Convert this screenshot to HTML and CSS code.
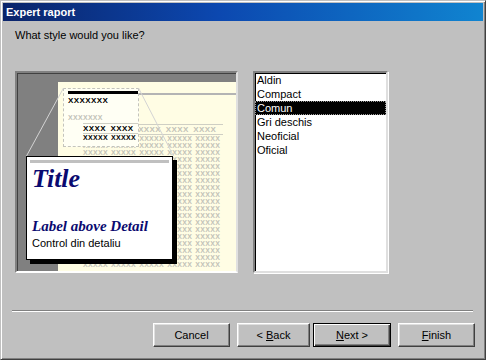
FILE: index.html
```html
<!DOCTYPE html>
<html>
<head>
<meta charset="utf-8">
<title>Expert raport</title>
<link rel="stylesheet" href="styles.css">
</head>
<body>
<div class="window">
  <div class="titlebar">Expert raport</div>
  <p class="prompt">What style would you like?</p>
  <div class="main">
    <div class="preview">
      <div class="paper">
        <div class="paper-rule"></div>
        <div class="grid">
          <div class="grid-head">XXXX XXXX XXXX XXXX XXXX</div>
          <div class="grid-row">XXXXX XXXXX XXXXX XXXXX XXXXX</div>
          <div class="grid-row">XXXXX XXXXX XXXXX XXXXX XXXXX</div>
          <div class="grid-row">XXXXX XXXXX XXXXX XXXXX XXXXX</div>
          <div class="grid-row">XXXXX XXXXX XXXXX XXXXX XXXXX</div>
          <div class="grid-row">XXXXX XXXXX XXXXX XXXXX XXXXX</div>
          <div class="grid-row">XXXXX XXXXX XXXXX XXXXX XXXXX</div>
          <div class="grid-row">XXXXX XXXXX XXXXX XXXXX XXXXX</div>
          <div class="grid-row">XXXXX XXXXX XXXXX XXXXX XXXXX</div>
          <div class="grid-row">XXXXX XXXXX XXXXX XXXXX XXXXX</div>
          <div class="grid-row">XXXXX XXXXX XXXXX XXXXX XXXXX</div>
          <div class="grid-row">XXXXX XXXXX XXXXX XXXXX XXXXX</div>
          <div class="grid-row">XXXXX XXXXX XXXXX XXXXX XXXXX</div>
          <div class="grid-row">XXXXX XXXXX XXXXX XXXXX XXXXX</div>
          <div class="grid-row">XXXXX XXXXX XXXXX XXXXX XXXXX</div>
          <div class="grid-row">XXXXX XXXXX XXXXX XXXXX XXXXX</div>
          <div class="grid-row">XXXXX XXXXX XXXXX XXXXX XXXXX</div>
          <div class="grid-row">XXXXX XXXXX XXXXX XXXXX XXXXX</div>
          <div class="grid-row">XXXXX XXXXX XXXXX XXXXX XXXXX</div>
          <div class="grid-row">XXXXX XXXXX XXXXX XXXXX XXXXX</div>
        </div>
        <div class="callout">
          <div class="callout-rule"></div>
          <div class="c-title">XXXXXXX</div>
          <div class="c-label">XXXXXXX</div>
          <div class="c-grid">
            <div class="c-head">XXXX XXXX</div>
            <div class="c-row">XXXXX XXXXX</div>
          </div>
        </div>
      </div>
      <svg class="leaders" width="219" height="198" viewBox="0 0 219 198">
        <line x1="46.5" y1="15" x2="9.5" y2="83" stroke="#d4d4d4" stroke-width="1"/>
        <line x1="121.5" y1="15" x2="156.5" y2="83" stroke="#d4d4d4" stroke-width="1"/>
      </svg>
      <div class="popup">
        <div class="popup-bar"></div>
        <div class="popup-title">Title</div>
        <div class="popup-label">Label above Detail</div>
        <div class="popup-control">Control din detaliu</div>
      </div>
    </div>
    <ul class="listbox">
      <li class="item">Aldin</li>
      <li class="item">Compact</li>
      <li class="item selected">Comun</li>
      <li class="item">Gri deschis</li>
      <li class="item">Neoficial</li>
      <li class="item">Oficial</li>
    </ul>
  </div>
  <div class="separator"></div>
  <div class="buttons">
    <button class="btn btn-cancel">Cancel</button>
    <button class="btn btn-back">&lt; <u>B</u>ack</button>
    <button class="btn btn-next btn-default"><u>N</u>ext &gt;</button>
    <button class="btn btn-finish"><u>F</u>inish</button>
  </div>
</div>
</body>
</html>
```
FILE: styles.css
```css
* { box-sizing: border-box; }

html, body {
  margin: 0;
  padding: 0;
  background: #c0c0c0;
}

body {
  font-family: "Liberation Sans", Arial, sans-serif;
  font-size: 11px;
  color: #000;
}

.window {
  width: 486px;
  height: 360px;
  background: #c0c0c0;
  border: 1px solid;
  border-color: #c0c0c0 #404040 #404040 #c0c0c0;
  box-shadow: inset 1px 1px 0 #ffffff, inset -1px -1px 0 #808080;
  padding: 2px;
  display: flex;
  flex-direction: column;
}

.titlebar {
  height: 18px;
  line-height: 18px;
  padding-left: 3px;
  color: #fff;
  font-weight: bold;
  font-size: 11px;
  background: linear-gradient(to right, #0a246a 0%, #0c48b0 45%, #1084d0 100%);
  flex: none;
}

.prompt {
  margin: 7px 0 0 12px;
  line-height: 14px;
  height: 14px;
}

.main {
  display: flex;
  gap: 15px;
  margin: 29px 0 0 12px;
  height: 202px;
}

/* preview illustration */
.preview {
  position: relative;
  width: 223px;
  height: 202px;
  border: 2px solid;
  border-color: #808080 #e0e0e0 #ffffff #808080;
  box-shadow: inset 1px 1px 0 #404040;
  background: #808080;
  padding: 9px 0 0 41px;
  display: flex;
}

.paper {
  position: relative;
  flex: 1;
  background: #fffde4;
  overflow: hidden;
}

.paper-rule {
  height: 2px;
  margin: 11px 0 0 80px;
  background: #b4b4b4;
}

.grid {
  margin: 29px 0 0 25px;
  width: 140px;
  border-top: 1px solid #cfcfc4;
  color: #c2c2b8;
  font-weight: bold;
  white-space: nowrap;
}

.grid-head {
  font-size: 8px;
  line-height: 9px;
  height: 10px;
  border-bottom: 1px solid #cfcfc4;
  letter-spacing: 0.4px;
  word-spacing: 2px;
}

.grid-row {
  font-size: 7px;
  line-height: 7px;
  height: 7px;
  letter-spacing: 0.3px;
  word-spacing: 1px;
}

.callout {
  position: absolute;
  left: 5px;
  top: 6px;
  width: 76px;
  height: 59px;
  border: 1px dashed #c4c4bc;
  background: #fffff4;
  font-weight: bold;
  white-space: nowrap;
}

.callout-rule {
  height: 3px;
  margin: 2px 0 0 4px;
  background: #000;
}

.c-title {
  margin: 3px 0 0 4px;
  font-size: 8px;
  line-height: 7px;
  height: 7px;
  color: #000;
  letter-spacing: 0.4px;
}

.c-label {
  margin: 10px 0 0 4px;
  font-size: 7px;
  line-height: 7px;
  height: 7px;
  color: #c2c2b8;
  letter-spacing: 0.3px;
}

.c-grid {
  margin: 2px 0 0 19px;
  border-top: 1px solid #cfcfc4;
  color: #000;
}

.c-head {
  font-size: 8px;
  line-height: 9px;
  height: 10px;
  border-bottom: 1px solid #cfcfc4;
  letter-spacing: 0.4px;
  word-spacing: 2px;
}

.c-row {
  font-size: 7px;
  line-height: 7px;
  height: 7px;
  letter-spacing: 0.3px;
  word-spacing: 1px;
}

.leaders {
  position: absolute;
  left: 0;
  top: 0;
}

.popup {
  position: absolute;
  left: 9px;
  top: 83px;
  width: 147px;
  height: 104px;
  border: 1px solid #000;
  background: #fff;
  box-shadow: 4px 4px 0 #000;
  padding: 3px;
}

.popup-bar {
  height: 3px;
  background: #c0c0c0;
}

.popup-title {
  margin: 1px 0 0 2px;
  font-family: "Liberation Serif", "Times New Roman", serif;
  font-weight: bold;
  font-style: italic;
  font-size: 26px;
  line-height: 30px;
  color: #0a0a70;
}

.popup-label {
  margin: 23px 0 0 2px;
  font-family: "Liberation Serif", "Times New Roman", serif;
  font-weight: bold;
  font-style: italic;
  font-size: 15px;
  line-height: 18px;
  color: #0a0a70;
}

.popup-control {
  margin: 2px 0 0 2px;
  font-size: 11px;
  line-height: 13px;
  color: #000;
}

/* list box */
.listbox {
  list-style: none;
  margin: 0;
  padding: 0;
  width: 135px;
  height: 202px;
  background: #fff;
  border: 2px solid;
  border-color: #808080 #dfdfdf #dfdfdf #808080;
  box-shadow: inset 1px 1px 0 #000, 1px 1px 0 #fff;
}

.item {
  height: 14px;
  line-height: 14px;
  padding-left: 2px;
}

.item.selected {
  background: #000;
  color: #fff;
  outline: 1px dotted #9a9a9a;
  outline-offset: -1px;
}

.separator {
  margin: 37px 10px 0 9px;
  height: 2px;
  border-top: 1px solid #808080;
  border-bottom: 1px solid #ffffff;
}

.buttons {
  display: flex;
  justify-content: flex-end;
  margin: 11px 8px 0 0;
  height: 24px;
}

.btn {
  height: 24px;
  font-family: "Liberation Sans", Arial, sans-serif;
  font-size: 11px;
  color: #000;
  background: #c0c0c0;
  border: 1px solid;
  border-color: #ffffff #404040 #404040 #ffffff;
  box-shadow: inset -1px -1px 0 #808080, inset 1px 1px 0 #dfdfdf;
  padding: 0;
  margin: 0;
}

.btn u { text-decoration: underline; }

.btn-cancel { width: 77px; }
.btn-back { width: 73px; margin-left: 7px; }
.btn-next { width: 78px; margin-left: 3px; }
.btn-finish { width: 77px; margin-left: 7px; }

.btn-default {
  border: 1px solid #000;
  box-shadow: inset 1px 1px 0 #ffffff, inset -1px -1px 0 #404040, inset -2px -2px 0 #808080;
}
```
